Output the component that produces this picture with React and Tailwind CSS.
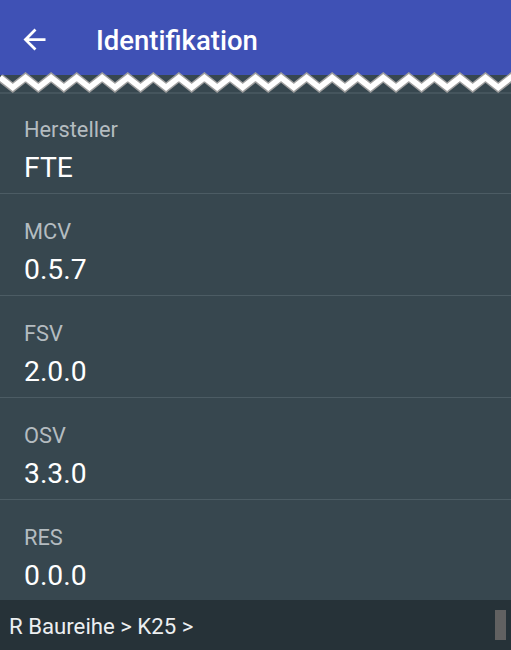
import React from "react";

const items = [
    { label: "Hersteller", value: "FTE" },
    { label: "MCV", value: "0.5.7" },
    { label: "FSV", value: "2.0.0" },
    { label: "OSV", value: "3.3.0" },
    { label: "RES", value: "0.0.0" },
];

// zigzag edge under the toolbar, 20 teeth across the width
function Zigzag() {
    const period = 511 / 20;
    let d = "";
    for (let i = 0; i <= 20; i++) {
        const x = i * period;
        d += `${i === 0 ? "M" : "L"}${x.toFixed(2)} 7.5 L${(x + period / 2).toFixed(2)} 17.5 `;
    }
    return (
        <svg width="511" height="24" viewBox="0 0 511 24" className="block -mt-[6px] relative">
            <rect x="0" y="0" width="511" height="5" fill="#3f51b5" />
            <rect x="0" y="5" width="511" height="19" fill="#37474f" />
            <rect x="0" y="22" width="511" height="2" fill="#45555d" />
            <path d={d} fill="none" stroke="#9e9e9e" strokeWidth="8.5" strokeLinejoin="miter" />
            <path d={d} fill="none" stroke="#ffffff" strokeWidth="5.5" strokeLinejoin="miter" />
        </svg>
    );
}

function App() {
    return (
        <div
            className="w-[511px] h-[650px] flex flex-col overflow-hidden bg-[#37474f]"
            style={{ fontFamily: "Roboto, 'Noto Sans', sans-serif" }}
        >
            {/* Toolbar */}
            <div className="h-[76px] shrink-0 bg-[#3f51b5] flex items-start">
                <div className="flex items-center h-[78px]">
                    <svg
                        width="33"
                        height="33"
                        viewBox="0 0 24 24"
                        className="ml-[18px]"
                        fill="#ffffff"
                    >
                        <path d="M20 11H7.83l5.59-5.59L12 4l-8 8 8 8 1.41-1.41L7.83 13H20v-2z" />
                    </svg>
                    <span className="ml-[45px] mt-[3px] text-white text-[27.5px] font-medium leading-none">
                        Identifikation
                    </span>
                </div>
            </div>
            <Zigzag />

            {/* List */}
            <div className="flex-1 overflow-hidden -mt-[2px]">
                {items.map((item) => (
                    <div
                        key={item.label}
                        className="px-[24px] pt-[24px] pb-[8px] border-b border-[#4c5c64]"
                    >
                        <div className="text-[21.8px] leading-[28px] text-[#b4bcc0]">
                            {item.label}
                        </div>
                        <div className="mt-[7px] text-[28.3px] leading-[34px] text-white">
                            {item.value}
                        </div>
                    </div>
                ))}
            </div>

            {/* Breadcrumb */}
            <div className="h-[50px] shrink-0 bg-[#263238] flex items-center justify-between pl-[9px] pr-[5px]">
                <span className="pt-[4px] text-[22.2px] text-[#eceff1]">R Baureihe &gt; K25 &gt;</span>
                <div className="w-[11px] h-[30px] bg-[#616161]" />
            </div>
        </div>
    );
}

export default App;
